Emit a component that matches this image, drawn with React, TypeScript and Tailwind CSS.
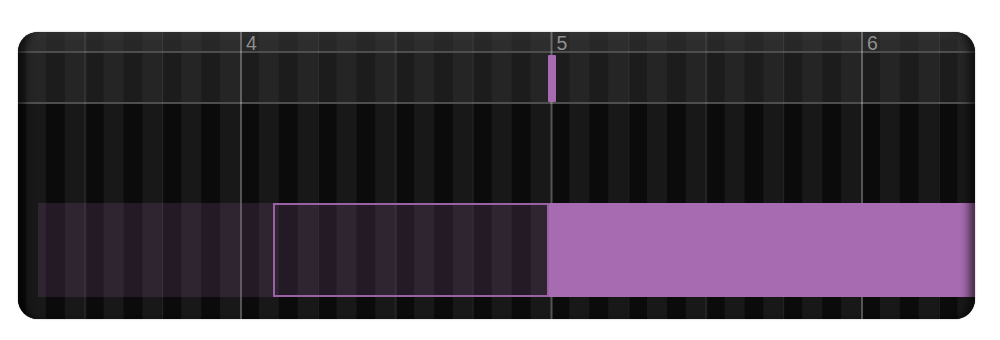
import React from "react";

const bars = [4, 5, 6];

export default function App() {
  return (
    <div className="w-[1000px] h-[340px] bg-white pl-[18px] pt-[32px] font-['Liberation_Sans','Inter',sans-serif]">
      <div className="relative w-[957px] h-[287px] rounded-[20px] overflow-hidden flex flex-col bg-[#0c0c0c] shadow-[0_0_1.5px_rgba(0,0,0,0.45)]">
        {/* ruler */}
        <div className="h-[21px] shrink-0 flex items-start border-b-2 border-[#4e4e4e] bg-[linear-gradient(90deg,#272727_50%,#2d2d2d_50%)] bg-[length:38.8125px_100%] bg-[position:27.94px_0] shadow-[inset_0_8px_8px_-4px_rgba(255,255,255,0.06)]">
          <div className="w-[222px] shrink-0" />
          {bars.map((n) => (
            <div
              key={n}
              className="w-[310.5px] shrink-0 pl-[6px] text-[19.5px] leading-[22.5px] text-[#8f8f8f] relative z-10"
            >
              {n}
            </div>
          ))}
        </div>

        {/* track row with playhead marker */}
        <div className="h-[51px] shrink-0 flex border-b-2 border-[#4e4e4e] pt-[2px] bg-[linear-gradient(90deg,#1c1c1c_50%,#252525_50%)] bg-[length:38.8125px_100%] bg-[position:27.94px_0]">
          <div className="w-[530px] shrink-0" />
          <div className="relative z-10 w-[8px] h-full rounded-[1px] bg-[#a66bb0]" />
        </div>

        {/* lower clip area */}
        <div className="flex-1 flex items-start pt-[99px] bg-[linear-gradient(90deg,#0b0b0b_50%,#181818_50%)] bg-[length:38.8125px_100%] bg-[position:27.94px_0]">
          <div className="relative z-10 flex h-[94px] w-full">
            <div className="w-[20px] shrink-0" />
            <div className="w-[235px] shrink-0 bg-[rgba(166,107,176,0.16)]" />
            <div className="w-[276px] shrink-0 bg-[rgba(166,107,176,0.16)] border-2 border-[#9a62a4]" />
            <div className="flex-1 bg-[#a66bb0]" />
          </div>
        </div>

        {/* beat / bar grid lines */}
        <div className="absolute inset-0 pointer-events-none bg-[linear-gradient(90deg,rgba(255,255,255,0.3)_0px,rgba(255,255,255,0.3)_1.5px,transparent_1.5px,transparent_77.6px,rgba(255,255,255,0.09)_77.6px,rgba(255,255,255,0.09)_78.8px,transparent_78.8px,transparent_155.2px,rgba(255,255,255,0.09)_155.2px,rgba(255,255,255,0.09)_156.4px,transparent_156.4px,transparent_232.9px,rgba(255,255,255,0.09)_232.9px,rgba(255,255,255,0.09)_234.1px,transparent_234.1px)] bg-[length:310.5px_100%] bg-[position:222px_0] bg-repeat-x" />

        {/* edge vignette */}
        <div className="absolute inset-0 z-20 pointer-events-none rounded-[20px] shadow-[inset_12px_0_9px_-6px_rgba(0,0,0,0.6),inset_-12px_0_9px_-6px_rgba(0,0,0,0.6)]" />
      </div>
    </div>
  );
}
